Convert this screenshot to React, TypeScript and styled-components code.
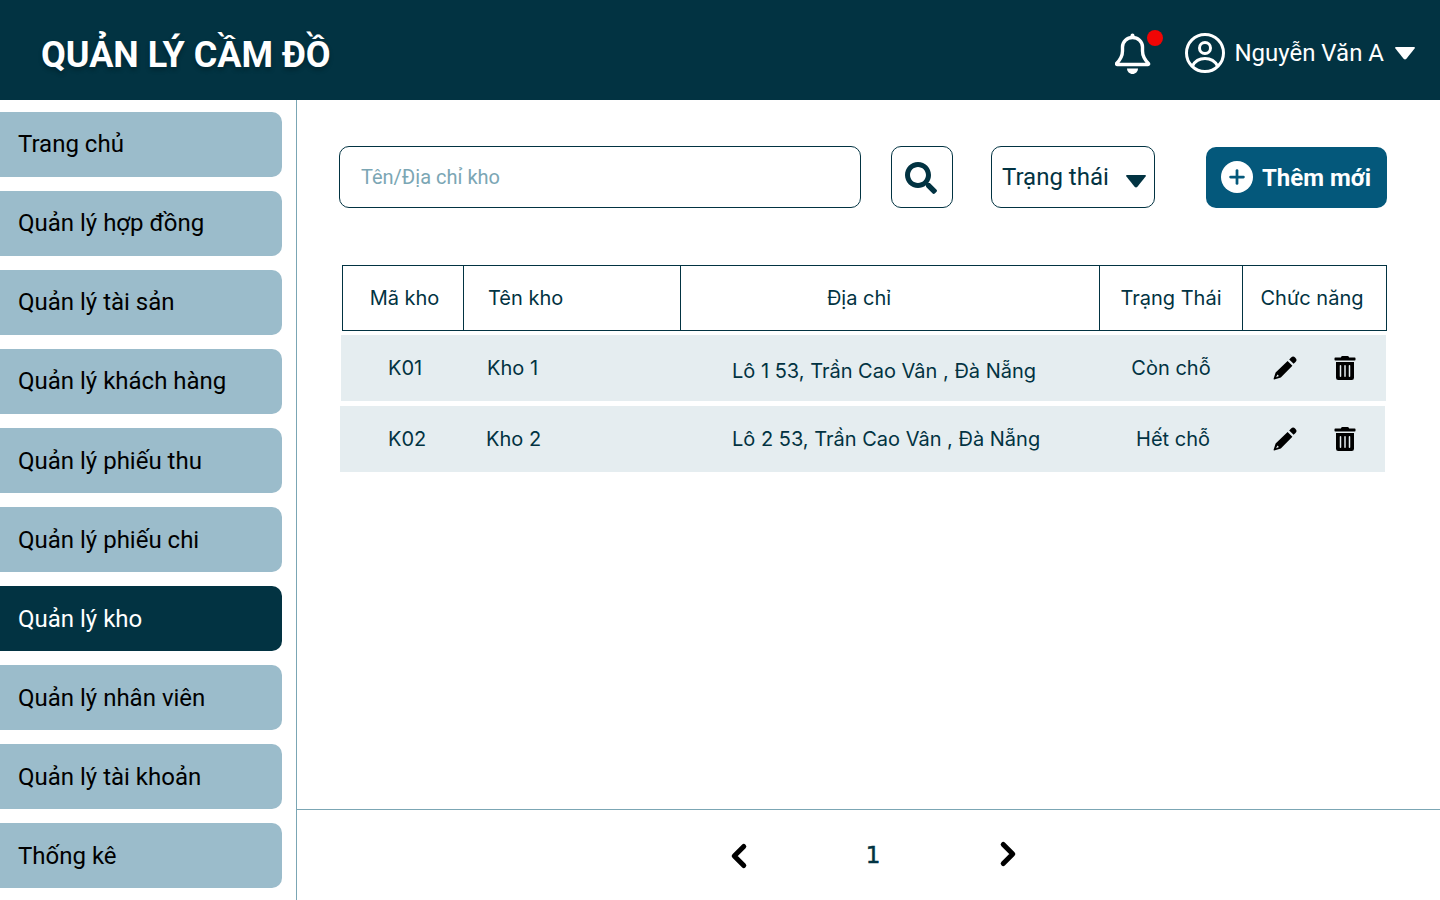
import React from 'react';
import styled, { createGlobalStyle } from 'styled-components';
import { FaSearch, FaTrashAlt } from 'react-icons/fa';
import { ChevronLeft, ChevronRight, Plus } from 'lucide-react';

const GlobalStyle = createGlobalStyle`
  html, body { margin: 0; padding: 0; background: #fff; }
  * { box-sizing: border-box; }
  body { font-family: Roboto, "Liberation Sans", sans-serif; overflow: hidden; }
`;

const Page = styled.div`
  width: 1440px;
  height: 900px;
  display: flex;
  flex-direction: column;
`;

const Header = styled.header`
  height: 100px;
  flex: none;
  background: #023342;
  display: flex;
  align-items: center;
  justify-content: space-between;
  padding: 0 25px 0 41px;
`;

const Title = styled.h1`
  margin: 10px 0 0;
  font: 700 36px/46px Roboto, sans-serif;
  color: #fff;
  text-shadow: 0 3px 4px rgba(0, 0, 0, 0.25);
`;

const UserArea = styled.div`
  display: flex;
  align-items: center;
  color: #fff;
  margin-top: 6px;
`;

const BellBox = styled.div`
  position: relative;
  width: 36px;
  height: 42px;
  margin: 1px 34px 0 0;
  display: flex;
`;

const Dot = styled.span`
  position: absolute;
  top: -3px;
  left: 32px;
  width: 16px;
  height: 16px;
  border-radius: 50%;
  background: #f00505;
`;

const UserName = styled.span`
  font: 400 24px/30px Roboto, sans-serif;
  margin-left: 9px;
  margin-right: 11px;
`;

const Caret = styled.span<{ $color: string }>`
  width: 20px;
  height: 13px;
  background: ${(p) => p.$color};
  clip-path: polygon(0 12%, 4% 0, 96% 0, 100% 12%, 56% 96%, 50% 100%, 44% 96%);
`;

const Body = styled.div`
  flex: 1;
  display: flex;
  min-height: 0;
`;

const Sidebar = styled.nav`
  width: 297px;
  flex: none;
  border-right: 1px solid #7ba6b4;
  padding: 12px 14px 0 0;
  display: flex;
  flex-direction: column;
  gap: 14px;
`;

const NavItem = styled.div<{ $active?: boolean }>`
  height: 65px;
  flex: none;
  display: flex;
  align-items: center;
  padding-left: 18px;
  border-radius: 0 10px 10px 0;
  background: ${(p) => (p.$active ? '#023342' : '#9bbccb')};
  color: ${(p) => (p.$active ? '#fff' : '#000')};
  font: 400 24px/30px Roboto, sans-serif;

  &:nth-child(-n + 4) {
    padding-bottom: 2px;
  }
`;

const Main = styled.main`
  flex: 1;
  display: flex;
  flex-direction: column;
  min-width: 0;
`;

const Content = styled.div`
  flex: 1;
  padding: 46px 53px 0 42px;
`;

const Toolbar = styled.div`
  display: flex;
  align-items: flex-start;
  margin-bottom: 57px;
`;

const SearchInput = styled.div`
  width: 522px;
  height: 62px;
  border: 1px solid #023342;
  border-radius: 10px;
  display: flex;
  align-items: center;
  padding-left: 21px;
  font: 400 20px/24px Roboto, sans-serif;
  color: #7ba6b4;
`;

const SearchButton = styled.div`
  width: 62px;
  height: 62px;
  margin-left: 30px;
  padding: 2px 2px 0 0;
  border: 1px solid #023342;
  border-radius: 10px;
  display: flex;
  align-items: center;
  justify-content: center;
  color: #023342;
`;

const StatusSelect = styled.div`
  width: 164px;
  height: 62px;
  margin-left: 38px;
  border: 1px solid #023342;
  border-radius: 10px;
  display: flex;
  align-items: center;
  justify-content: space-between;
  padding: 0 8px 0 10px;
  font: 400 24px/30px Roboto, sans-serif;
  color: #023342;

  span:first-child {
    margin-top: 0;
  }

  span:last-child {
    margin-top: 8px;
  }
`;

const AddButton = styled.div`
  width: 181px;
  height: 61px;
  margin: 1px 0 0 51px;
  border-radius: 10px;
  background: #04587b;
  color: #fff;
  display: flex;
  align-items: center;
  padding-left: 15px;
  font: 700 24px/30px Roboto, sans-serif;
`;

const PlusCircle = styled.span`
  width: 32px;
  height: 32px;
  margin: -2px 9px 0 0;
  border-radius: 50%;
  background: #fff;
  color: #04587b;
  display: flex;
  align-items: center;
  justify-content: center;
`;

const HeadRow = styled.div`
  width: 1045px;
  height: 66px;
  margin-left: 3px;
  border: 1px solid #023342;
  display: flex;
`;

const HeadCell = styled.div<{ $width: number; $center?: boolean; $left?: number; $right?: number }>`
  width: ${(p) => p.$width}px;
  flex: none;
  display: flex;
  align-items: center;
  justify-content: ${(p) => (p.$center ? 'center' : 'flex-start')};
  padding: 0 ${(p) => p.$right ?? 0}px 1px ${(p) => p.$left ?? 0}px;
  border-right: 1px solid #023342;
  font: 400 20px/24px Inter, sans-serif;
  color: #023342;

  &:last-child {
    border-right: 0;
  }
`;

const Row = styled.div<{ $indent: number; $top: number }>`
  width: 1045px;
  height: 66px;
  margin: ${(p) => p.$top}px 0 0 ${(p) => p.$indent}px;
  background: #e5edf0;
  display: flex;
  align-items: center;
`;

const Cell = styled.div<{ $width: number; $pad?: number; $center?: boolean; $shift?: number }>`
  width: ${(p) => p.$width}px;
  flex: none;
  padding-left: ${(p) => p.$pad ?? 0}px;
  text-align: ${(p) => (p.$center ? 'center' : 'left')};
  transform: translateY(${(p) => p.$shift ?? 0}px);
  font: 400 20px/24px Inter, sans-serif;
  color: #023342;
`;

const Actions = styled.div<{ $pad: number }>`
  flex: 1;
  display: flex;
  align-items: center;
  gap: 36px;
  padding-left: ${(p) => p.$pad}px;
  color: #000;
`;

const Footer = styled.footer`
  height: 91px;
  flex: none;
  border-top: 1px solid #7ba6b4;
  display: flex;
  align-items: center;
  padding-left: 423px;
  color: #000;
`;

const PrevIcon = styled(ChevronLeft)`
  margin-top: 2px;
`;

const NextIcon = styled(ChevronRight)`
  margin-bottom: 2px;
`;

const PageNumber = styled.span`
  width: 46px;
  margin: 0 93px 0 92px;
  text-align: center;
  font: 400 23px/26px "DejaVu Sans", sans-serif;
  -webkit-text-stroke: 0.5px #023342;
  color: #023342;
`;

function BellIcon() {
  return (
    <svg width="36" height="42" viewBox="0 0 36 42" fill="none" stroke="currentColor">
      <circle cx="17.5" cy="2.5" r="2" fill="currentColor" stroke="none" />
      <path
        d="M2 31.5h31c.6 0 .8-.6.4-1C30 27 27.5 24 27.5 18v-4c0-5.5-4.5-9.5-10-9.5s-10 4-10 9.5v4c0 6-2.500 9-5.900 12.500-.4.4-.2 1 .4 1z"
        strokeWidth="3.4"
        strokeLinejoin="round"
      />
      <path d="M12 35.500h11c0 3-2.500 5.500-5.500 5.500s-5.500-2.500-5.500-5.500z" fill="currentColor" stroke="none" />
    </svg>
  );
}

function UserIcon() {
  return (
    <svg width="40" height="40" viewBox="0 0 40 40" fill="none" stroke="currentColor" strokeWidth="3">
      <circle cx="20" cy="20" r="18.500" />
      <circle cx="20" cy="15" r="5.500" />
      <path d="M7.500 33c2.500-5 7-7.500 12.500-7.500s10 2.500 12.500 7.500" />
    </svg>
  );
}

function PencilIcon() {
  return (
    <svg width="24" height="24" viewBox="0 0 24 24" fill="currentColor">
      <path d="M16.200 3.400l1.900-1.900a2.800 2.800 0 0 1 4 0l.4.4a2.800 2.800 0 0 1 0 4l-1.900 1.900z" />
      <path
        fillRule="evenodd"
        d="M14.600 5l4.800 4.800L7.800 21.400 1.200 23.400c-.4.100-.7-.2-.6-.6L2.600 16.400zM4.300 18.400l-1.100 2.800 2.800-1.100z"
      />
    </svg>
  );
}

const menu = [
  'Trang chủ',
  'Quản lý hợp đồng',
  'Quản lý tài sản',
  'Quản lý khách hàng',
  'Quản lý phiếu thu',
  'Quản lý phiếu chi',
  'Quản lý kho',
  'Quản lý nhân viên',
  'Quản lý tài khoản',
  'Thống kê',
];

const rows = [
  { code: 'K01', name: 'Kho 1', address: 'Lô 1 53, Trần Cao Vân , Đà Nẵng', status: 'Còn chỗ', indent: 2, top: 4, codePad: 47, addrPad: 1, addrShift: 3, statusWidth: 144, actionPad: 30 },
  { code: 'K02', name: 'Kho 2', address: 'Lô 2 53, Trần Cao Vân , Đà Nẵng', status: 'Hết chỗ', indent: 1, top: 5, codePad: 48, addrPad: 2, addrShift: 0, statusWidth: 150, actionPad: 25 },
];

export default function App() {
  return (
    <Page>
      <GlobalStyle />
      <Header>
        <Title>QUẢN LÝ CẦM ĐỒ</Title>
        <UserArea>
          <BellBox>
            <BellIcon />
            <Dot />
          </BellBox>
          <UserIcon />
          <UserName>Nguyễn Văn A</UserName>
          <Caret $color="#fff" />
        </UserArea>
      </Header>
      <Body>
        <Sidebar>
          {menu.map((item) => (
            <NavItem key={item} $active={item === 'Quản lý kho'}>
              {item}
            </NavItem>
          ))}
        </Sidebar>
        <Main>
          <Content>
            <Toolbar>
              <SearchInput>Tên/Địa chỉ kho</SearchInput>
              <SearchButton>
                <FaSearch size={32} />
              </SearchButton>
              <StatusSelect>
                <span>Trạng thái</span>
                <Caret $color="#023342" />
              </StatusSelect>
              <AddButton>
                <PlusCircle>
                  <Plus size={22} strokeWidth={3} />
                </PlusCircle>
                Thêm mới
              </AddButton>
            </Toolbar>
            <HeadRow>
              <HeadCell $width={121} $center $left={3}>Mã kho</HeadCell>
              <HeadCell $width={217} $left={24}>Tên kho</HeadCell>
              <HeadCell $width={419} $center $right={62}>Địa chỉ</HeadCell>
              <HeadCell $width={143} $center>Trạng Thái</HeadCell>
              <HeadCell $width={143} $center $right={5}>Chức năng</HeadCell>
            </HeadRow>
            {rows.map((row) => (
              <Row key={row.code} $indent={row.indent} $top={row.top}>
                <Cell $width={122} $pad={row.codePad}>{row.code}</Cell>
                <Cell $width={268} $pad={24}>{row.name}</Cell>
                <Cell $width={368} $pad={row.addrPad} $shift={row.addrShift}>{row.address}</Cell>
                <Cell $width={row.statusWidth} $center>{row.status}</Cell>
                <Actions $pad={row.actionPad}>
                  <PencilIcon />
                  <FaTrashAlt size={24} />
                </Actions>
              </Row>
            ))}
          </Content>
          <Footer>
            <PrevIcon size={38} strokeWidth={3.2} />
            <PageNumber>1</PageNumber>
            <NextIcon size={38} strokeWidth={3.2} />
          </Footer>
        </Main>
      </Body>
    </Page>
  );
}
